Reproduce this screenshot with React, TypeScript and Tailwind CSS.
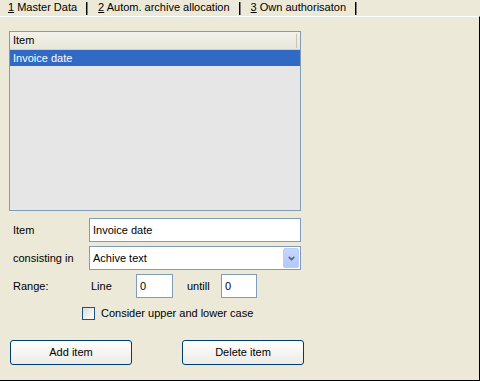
import { ChevronDown } from "lucide-react";

const font = { fontFamily: '"Liberation Sans", Arial, sans-serif' };

function Tab({ num, label, first }: { num: string; label: string; first?: boolean }) {
  return (
    <div className="flex items-center h-full">
      <span className={`${first ? "pl-[8px]" : "pl-[10px]"} pr-[9px] text-[11px] text-black leading-none`}>
        <span className="underline">{num}</span> {label}
      </span>
      <div className="h-[13px] w-[2px] border-l border-black border-r border-r-[#808080] mt-[2px]" />
    </div>
  );
}

function TextBox({ value, className }: { value: string; className: string }) {
  return (
    <div className={`h-[24px] bg-white border border-[#7F9DB9] flex items-center px-[3px] text-[11px] text-black ${className}`}>
      {value}
    </div>
  );
}

export default function App() {
  return (
    <div className="w-[480px] h-[381px] bg-[#ECE9D8] flex flex-col overflow-hidden" style={font}>
      {/* Tab strip */}
      <div className="h-[16px] flex items-end pb-[1px]">
        <Tab num="1" label="Master Data" first />
        <Tab num="2" label="Autom. archive allocation" />
        <Tab num="3" label="Own authorisaton" />
      </div>

      {/* Panel */}
      <div className="flex-1 border-t border-white border-r border-r-black border-b border-b-black pl-[9px] pt-[14px]">
        {/* List */}
        <div className="w-[292px] h-[180px] border border-[#7F9DB9] bg-[#E6E6E6] flex flex-col">
          <div className="h-[18px] bg-gradient-to-b from-[#F3F2EA] to-[#E9E7DA] border-b border-[#D6D2C2] flex items-center pl-[3px] text-[11px] text-black relative">
            Item
            <div className="absolute right-[3px] top-[2px] h-[14px] w-[1px] bg-[#C7C5B2]" />
          </div>
          <div className="h-[16px] bg-[#316AC5] text-white text-[11px] flex items-center pl-[3px]">Invoice date</div>
        </div>

        {/* Form */}
        <div className="mt-[7px] flex flex-col gap-[4px] w-[292px]">
          <div className="flex items-center">
            <span className="w-[80px] pl-[4px] text-[11px]">Item</span>
            <TextBox value="Invoice date" className="w-[212px]" />
          </div>
          <div className="flex items-center">
            <span className="w-[80px] pl-[4px] text-[11px]">consisting in</span>
            <div className="w-[212px] h-[24px] bg-white border border-[#7F9DB9] flex items-center justify-between pl-[3px] pr-[1px] text-[11px]">
              Achive text
              <div className="w-[16px] h-[20px] rounded-[2px] bg-gradient-to-b from-[#C6D6FC] to-[#B2C8F8] border border-[#B9CDF7] flex items-center justify-center">
                <ChevronDown className="w-[9px] h-[9px] text-[#4D6185]" strokeWidth={4} />
              </div>
            </div>
          </div>
          <div className="flex items-center">
            <span className="w-[82px] pl-[4px] text-[11px]">Range:</span>
            <span className="w-[45px] text-[11px]">Line</span>
            <TextBox value="0" className="w-[37px]" />
            <span className="w-[48px] pl-[14px] text-[11px]">untill</span>
            <TextBox value="0" className="w-[36px]" />
          </div>
        </div>

        <div className="mt-[7px] ml-[73px] flex items-center gap-[6px] text-[11px]">
          <div className="w-[13px] h-[13px] border border-[#1C5180] bg-gradient-to-br from-[#DCDCD7] to-white" />
          Consider upper and lower case
        </div>

        <div className="mt-[18px] flex gap-[50px] pl-[1px]">
          <button className="w-[122px] h-[25px] rounded-[3px] border border-[#003C74] bg-gradient-to-b from-white to-[#ECEBE6] text-[11px] text-black">
            Add item
          </button>
          <button className="w-[122px] h-[25px] rounded-[3px] border border-[#003C74] bg-gradient-to-b from-white to-[#ECEBE6] text-[11px] text-black">
            Delete item
          </button>
        </div>
      </div>
    </div>
  );
}
